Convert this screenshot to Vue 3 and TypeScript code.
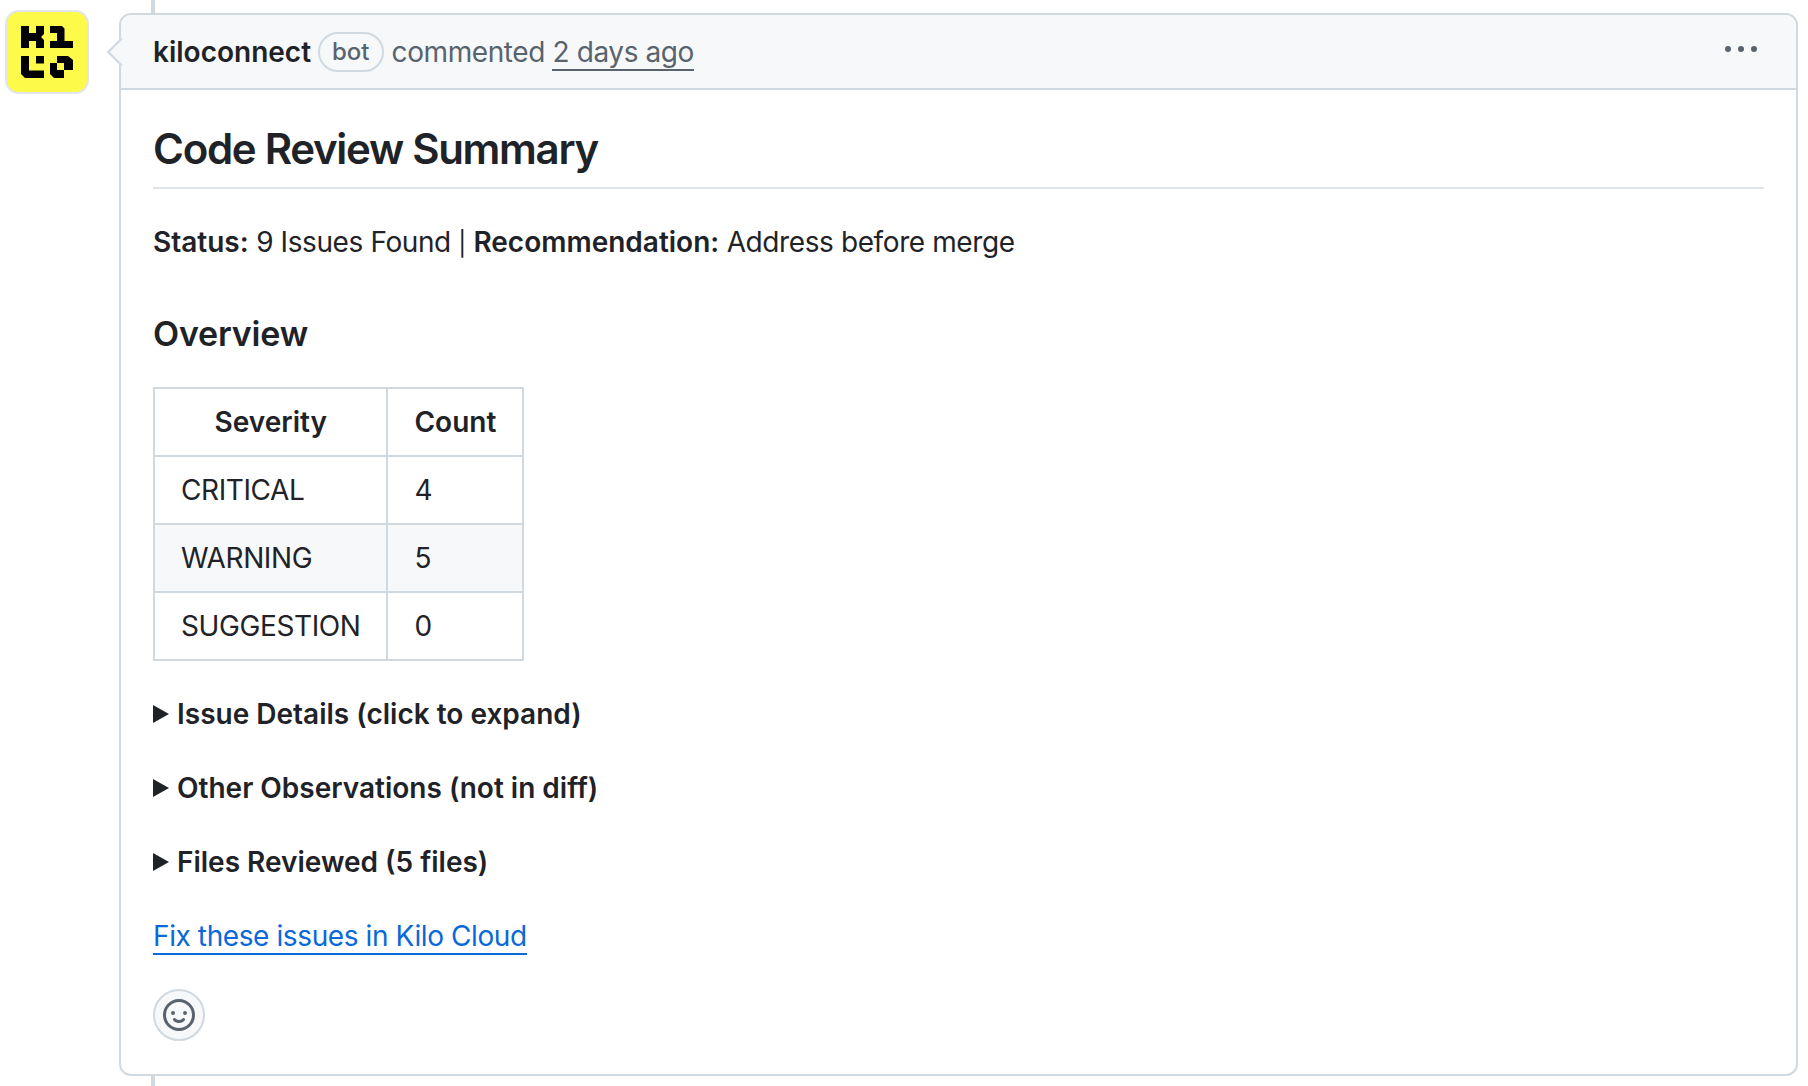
<script setup lang="ts">
const rows: { name: string; count: number }[] = [
  { name: 'CRITICAL', count: 4 },
  { name: 'WARNING', count: 5 },
  { name: 'SUGGESTION', count: 0 },
]
const sections: string[] = [
  'Issue Details (click to expand)',
  'Other Observations (not in diff)',
  'Files Reviewed (5 files)',
]
</script>

<template>
  <div class="page">
    <div class="avatar">
      <svg width="52" height="52" viewBox="0 0 52 52" fill="#000">
        <path d="M0 0H8V7H15V0H23V8L20 11L23 14V22H15V15H8V22H0Z" />
        <path d="M29 0H41L43.5 2.5V15H52V22H29V15H36V7H29Z" />
        <path d="M0 30H8V44.5H23V52H4L0 48Z" />
        <rect x="15" y="30" width="8" height="7.5" />
        <path fill-rule="evenodd" d="M36 30H47L52 34V44H43V52H33L29 48V37H36ZM36 37V44H43V37Z" />
      </svg>
    </div>
    <div class="comment">
      <header class="head">
        <span class="notch"></span>
        <strong class="author">kiloconnect</strong>
        <span class="label">bot</span>
        <span class="meta">commented <a class="time">2 days ago</a></span>
        <svg class="kebab" width="34" height="8" viewBox="0 0 34 8" fill="#59636e">
          <circle cx="4" cy="4" r="3" /><circle cx="17" cy="4" r="3" /><circle cx="30" cy="4" r="3" />
        </svg>
      </header>
      <div class="body">
        <h2 class="title">Code Review Summary</h2>
        <p class="status"><strong>Status:</strong> 9 Issues Found <span class="pipe">|</span> <strong>Recommendation:</strong> Address before merge</p>
        <h3 class="overview">Overview</h3>
        <table class="table">
          <thead>
            <tr><th>Severity</th><th>Count</th></tr>
          </thead>
          <tbody>
            <tr v-for="r in rows" :key="r.name"><td>{{ r.name }}</td><td>{{ r.count }}</td></tr>
          </tbody>
        </table>
        <div v-for="s in sections" :key="s" class="section">
          <span class="tri"></span><strong>{{ s }}</strong>
        </div>
        <p class="link-row"><a class="link">Fix these issues in Kilo Cloud</a></p>
        <div class="react">
          <svg width="32" height="32" viewBox="0 0 16 16" fill="#59636e">
            <path d="M8 0a8 8 0 1 1 0 16A8 8 0 0 1 8 0ZM1.5 8a6.5 6.5 0 1 0 13 0 6.5 6.5 0 0 0-13 0Zm3.82 1.636a.75.75 0 0 1 1.038.175l.007.009c.103.118.22.222.35.31.264.178.683.37 1.285.37.602 0 1.02-.192 1.285-.371.13-.088.247-.192.35-.31l.007-.008a.75.75 0 0 1 1.222.87l-.022-.015c.02.013.021.015.021.015v.001l-.001.002-.002.003-.005.007-.014.019a2.066 2.066 0 0 1-.184.213c-.16.166-.338.316-.53.445-.63.418-1.37.638-2.127.629-.946 0-1.652-.308-2.126-.63a3.331 3.331 0 0 1-.715-.657l-.014-.02-.005-.006-.002-.003v-.002h-.001l.613-.432-.614.43a.75.75 0 0 1 .183-1.044ZM12 7a1 1 0 1 1-2 0 1 1 0 0 1 2 0ZM5 8a1 1 0 1 1 0-2 1 1 0 0 1 0 2Z" />
          </svg>
        </div>
      </div>
    </div>
  </div>
</template>

<style>
html, body { margin: 0; background: #fff; }
</style>

<style scoped>
.page {
  position: relative;
  width: 1808px;
  height: 1086px;
  padding: 13px 10px 10px 119px;
  box-sizing: border-box;
  font-family: Inter, "Liberation Sans", sans-serif;
  color: #1f2328;
  letter-spacing: -0.4px;
  background: linear-gradient(#d1d9e0, #d1d9e0) 151px 0 / 4px 100% no-repeat;
}
.avatar {
  position: absolute;
  left: 5px;
  top: 10px;
  width: 84px;
  height: 84px;
  box-sizing: border-box;
  border: 2px solid #e2e5e9;
  border-radius: 14px;
  background: #fdfa4a;
  display: flex;
  align-items: center;
  justify-content: center;
}
.comment {
  background: #fff;
  border: 2px solid #d1d9e0;
  border-radius: 12px;
  height: 1063px;
  box-sizing: border-box;
}
.head {
  position: relative;
  display: flex;
  align-items: center;
  height: 75px;
  padding: 0 32px;
  box-sizing: border-box;
  background: #f6f8fa;
  border-bottom: 2px solid #d1d9e0;
  border-radius: 10px 10px 0 0;
  font-size: 28px;
}
.notch {
  position: absolute;
  left: -10.5px;
  top: 27px;
  width: 20px;
  height: 20px;
  box-sizing: border-box;
  background: #f6f8fa;
  border-left: 2px solid #d1d9e0;
  border-bottom: 2px solid #d1d9e0;
  transform: rotate(45deg);
}
strong { font-weight: 600; letter-spacing: 0; }
.author { font-size: 28px; }
.label {
  margin-left: 7px;
  border: 2px solid #d1d9e0;
  border-radius: 20px;
  padding: 0 12px;
  height: 40px;
  line-height: 36px;
  box-sizing: border-box;
  font-size: 24px;
  font-weight: 500;
  letter-spacing: 0;
  color: #59636e;
}
.meta { margin-left: 8px; color: #59636e; }
.time { color: #59636e; border-bottom: 2px solid #59636e; }
.kebab { margin-left: auto; margin-right: 6px; margin-top: -5px; }
.body { padding: 34px 32px 0; }
.title {
  margin: 0;
  font-size: 42px;
  font-weight: 600;
  letter-spacing: -1.3px;
  line-height: 50px;
  padding-bottom: 13px;
  border-bottom: 2px solid #dfe4e9;
}
.status { margin: 33px 0 0; font-size: 28px; line-height: 40px; }
.pipe { font-size: 24px; }
.overview { margin: 49px 0 0; font-size: 34px; font-weight: 600; letter-spacing: -0.2px; line-height: 42px; }
.table { margin-top: 32px; border-collapse: collapse; font-size: 28px; line-height: 40px; }
.table th, .table td { border: 2px solid #d1d9e0; padding: 13px 26px; text-align: left; font-weight: 400; height: 40px; }
.table th { text-align: center; font-weight: 600; letter-spacing: 0; }
.table tbody tr:nth-child(2) { background: #f6f8fa; }
.section { margin-top: 32px; font-size: 28px; line-height: 42px; display: flex; align-items: center; }
.tri {
  width: 0; height: 0;
  border-left: 16px solid #1f2328;
  border-top: 9px solid transparent;
  border-bottom: 9px solid transparent;
  margin-right: 8px;
}
.link-row { margin: 32px 0 0; font-size: 28px; line-height: 42px; }
.link { color: #0969da; border-bottom: 2px solid #0969da; }
.react {
  margin-top: 32px;
  width: 52px;
  height: 52px;
  box-sizing: border-box;
  border: 2px solid #d1d9e0;
  border-radius: 50%;
  background: #f6f8fa;
  display: flex;
  align-items: center;
  justify-content: center;
}
</style>
